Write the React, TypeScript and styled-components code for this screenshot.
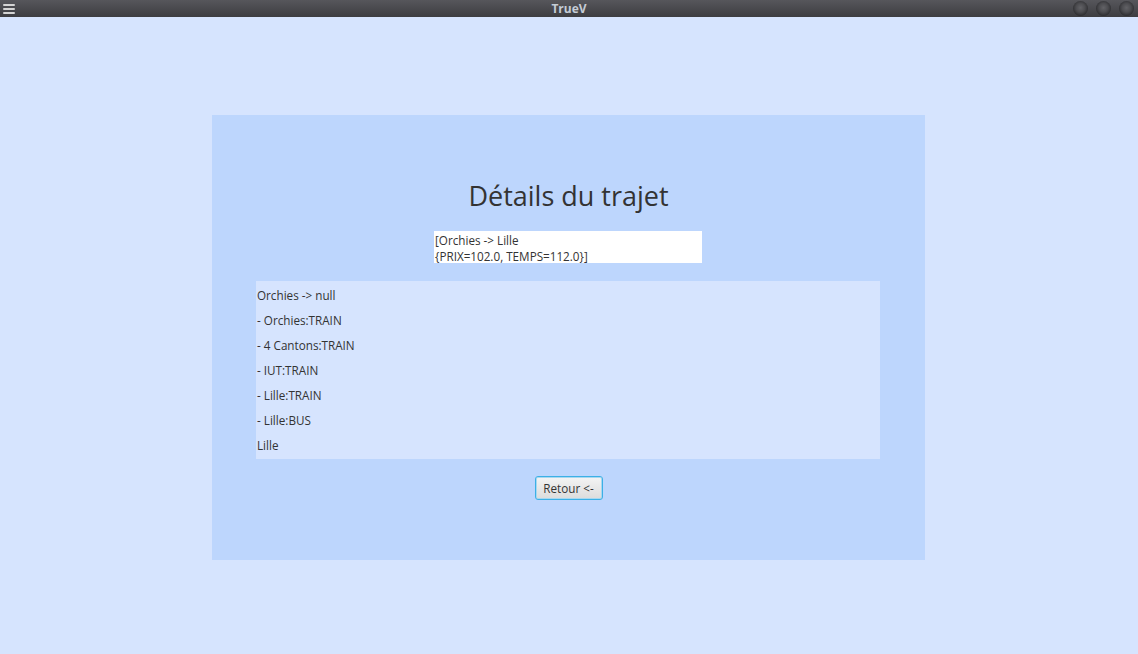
import React from "react";
import styled, { createGlobalStyle } from "styled-components";

const Global = createGlobalStyle`
  html, body { margin: 0; padding: 0; background: #d6e4fe; }
  body { font-family: "Open Sans", "Noto Sans", sans-serif; }
`;

const Window = styled.div`
  width: 1138px;
  height: 654px;
  display: flex;
  flex-direction: column;
  background: #d6e4fe;
  overflow: hidden;
`;

const TitleBar = styled.div`
  height: 17px;
  flex: 0 0 17px;
  display: flex;
  align-items: center;
  justify-content: space-between;
  background: linear-gradient(#56565b, #3d3d41);
  position: relative;
  padding: 0 4px 0 3px;
`;

const TitleText = styled.div`
  position: absolute;
  left: 0;
  right: 0;
  top: 0;
  text-align: center;
  font-family: "Open Sans", sans-serif;
  font-weight: 700;
  font-size: 12px;
  line-height: 17px;
  color: #c4ccd6;
  pointer-events: none;
`;

const Menu = styled.div`
  display: flex;
  flex-direction: column;
  gap: 2px;
  width: 12px;
`;

const MenuBar = styled.div`
  height: 2px;
  background: #d4d4d4;
  border-radius: 1px;
`;

const Controls = styled.div`
  display: flex;
  gap: 8px;
`;

const Circle = styled.div`
  width: 15px;
  height: 15px;
  border-radius: 50%;
  background: radial-gradient(circle at 50% 45%, #626266 0%, #4c4c50 40%, #2e2e31 72%, #3c3c3f 100%);
`;

const Stage = styled.div`
  flex: 1;
  display: flex;
  align-items: center;
  justify-content: center;
  padding: 4px 1px 0 0;
`;

const Panel = styled.div`
  width: 713px;
  height: 445px;
  box-sizing: border-box;
  background: #bdd6fd;
  display: flex;
  flex-direction: column;
  align-items: center;
  padding-top: 62px;
`;

const Heading = styled.h1`
  margin: 0 0 17px;
  font-family: "Open Sans", sans-serif;
  font-weight: 400;
  font-size: 27px;
  line-height: 37px;
  color: #333333;
`;

const Summary = styled.div`
  width: 268px;
  height: 32px;
  box-sizing: border-box;
  background: #ffffff;
  margin: 0 1px 18px 0;
  padding: 1px 1px 0;
  font-size: 11.7px;
  line-height: 16px;
  color: #333333;
`;

const List = styled.div`
  width: 624px;
  height: 178px;
  box-sizing: border-box;
  background: #d6e4fe;
  margin: 0 1px 17px 0;
  padding-top: 2px;
  display: flex;
  flex-direction: column;
`;

const Item = styled.div`
  height: 25px;
  line-height: 25px;
  padding-left: 1px;
  font-size: 11.7px;
  color: #333333;
`;

const Button = styled.button`
  width: 68px;
  height: 24px;
  box-sizing: border-box;
  border: 1px solid #3cb0e6;
  border-radius: 3px;
  background: linear-gradient(#f4f4f4, #dcdcdc);
  box-shadow: inset 0 0 0 1px #a8d8f0;
  font-family: "Open Sans", sans-serif;
  font-size: 11.7px;
  color: #333333;
  padding: 0;
  cursor: pointer;
`;

const items = [
  "Orchies -> null",
  "- Orchies:TRAIN",
  "- 4 Cantons:TRAIN",
  "- IUT:TRAIN",
  "- Lille:TRAIN",
  "- Lille:BUS",
  "Lille",
];

export default function App() {
  return (
    <>
      <Global />
      <Window>
        <TitleBar>
          <Menu>
            <MenuBar />
            <MenuBar />
            <MenuBar />
          </Menu>
          <TitleText>TrueV</TitleText>
          <Controls>
            <Circle />
            <Circle />
            <Circle />
          </Controls>
        </TitleBar>
        <Stage>
          <Panel>
            <Heading>Détails du trajet</Heading>
            <Summary>
              [Orchies -&gt; Lille
              <br />
              {"{PRIX=102.0, TEMPS=112.0}]"}
            </Summary>
            <List>
              {items.map((t) => (
                <Item key={t}>{t}</Item>
              ))}
            </List>
            <Button>Retour &lt;-</Button>
          </Panel>
        </Stage>
      </Window>
    </>
  );
}
